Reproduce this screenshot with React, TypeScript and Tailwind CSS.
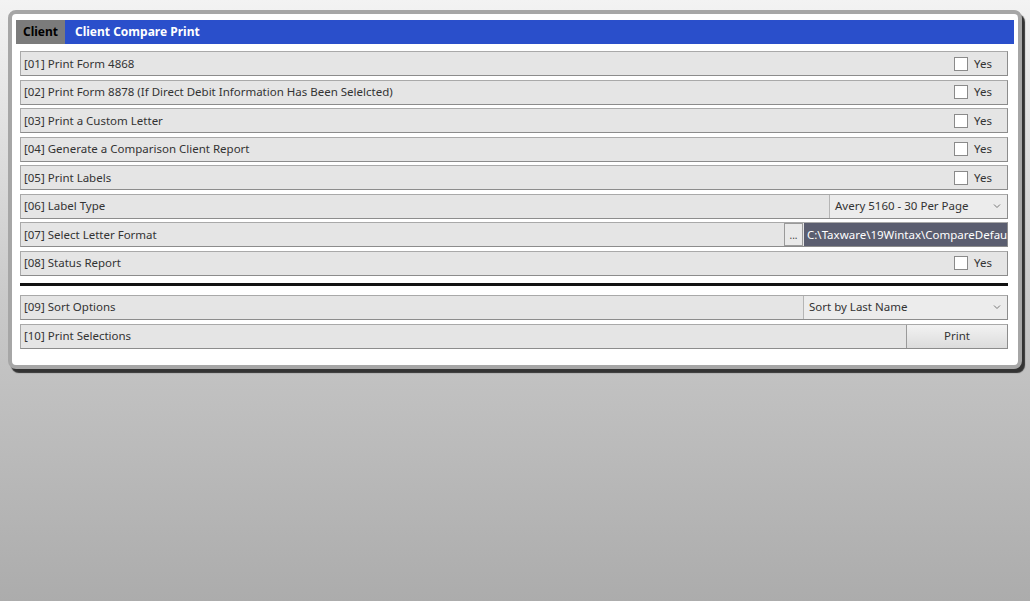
import React from "react";

const font = { fontFamily: '"Segoe UI", "Noto Sans", "Open Sans", sans-serif' };

function Row({ label, children }: { label: string; children?: React.ReactNode }) {
  return (
    <div className="flex h-[25px] items-stretch border border-[#a9a9a9] border-r-[#8c8c8c] border-b-[#8c8c8c] bg-[#e5e5e5]">
      <div className="flex flex-1 items-center pl-[3px] text-[11.5px] text-[#333]">{label}</div>
      {children}
    </div>
  );
}

function Check() {
  return (
    <div className="flex items-center pr-[15px]">
      <div className="h-[14px] w-[14px] border border-[#8a8a8a] bg-white" />
      <span className="ml-[6px] text-[11.5px] text-[#333]">Yes</span>
    </div>
  );
}

function Select({ text, w }: { text: string; w: string }) {
  return (
    <div className={`flex items-center justify-between border-l border-[#b5b5b5] bg-[#ececec] pl-[5px] pr-[6px] text-[11.5px] text-[#333] ${w}`}>
      <span>{text}</span>
      <svg width="8" height="6" viewBox="0 0 8 6"><path d="M1 1.5 L4 4.5 L7 1.5" fill="none" stroke="#777" strokeWidth="1" /></svg>
    </div>
  );
}

export default function App() {
  return (
    <div className="h-[601px] w-[1030px] overflow-hidden bg-gradient-to-b from-[#f3f3f3] via-[#c9c9c9] to-[#acacac] pl-[8px] pt-[10px]" style={font}>
      <div className="w-[1014px] rounded-[8px] border-[4px] border-[#a6a6a6] bg-white px-[4px] pb-[16px] pt-[6px] shadow-[3px_4px_1px_#333]">
        <div className="flex h-[24px] items-stretch">
          <div className="flex w-[49px] items-center justify-center bg-[#7b7b7b] text-[12px] font-bold text-black">Client</div>
          <div className="flex flex-1 items-center bg-[#2a4fcb] pl-[10px] text-[12px] font-bold text-white">Client Compare Print</div>
        </div>
        <div className="flex flex-col gap-[3.5px] px-[4px] pt-[7px] pr-[6px]">
          <Row label="[01] Print Form 4868"><Check /></Row>
          <Row label="[02] Print Form 8878 (If Direct Debit Information Has Been Selelcted)"><Check /></Row>
          <Row label="[03] Print a Custom Letter"><Check /></Row>
          <Row label="[04] Generate a Comparison Client Report"><Check /></Row>
          <Row label="[05] Print Labels"><Check /></Row>
          <Row label="[06] Label Type"><Select text="Avery 5160 - 30 Per Page" w="w-[178px]" /></Row>
          <Row label="[07] Select Letter Format">
            <div className="flex items-stretch">
              <div className="flex w-[19px] items-center justify-center border border-[#9a9a9a] bg-[#e9e9e9] text-[10px] leading-none text-[#444]">...</div>
              <div className="ml-[1px] flex w-[203px] items-center overflow-hidden whitespace-nowrap bg-[#5b5e70] pl-[3px] text-[11.5px] text-white">C:\Taxware\19Wintax\CompareDefaul</div>
            </div>
          </Row>
          <Row label="[08] Status Report"><Check /></Row>
        </div>
        <div className="mx-[4px] mr-[6px] mt-[7px] h-[3px] bg-[#111]" />
        <div className="flex flex-col gap-[4px] px-[4px] pt-[9px] pr-[6px]">
          <Row label="[09] Sort Options"><Select text="Sort by Last Name" w="w-[204px]" /></Row>
          <Row label="[10] Print Selections">
            <div className="flex w-[101px] items-center justify-center border-l border-[#9a9a9a] bg-gradient-to-b from-[#f2f2f2] to-[#dcdcdc] text-[11.5px] text-[#333]">Print</div>
          </Row>
        </div>
      </div>
    </div>
  );
}
